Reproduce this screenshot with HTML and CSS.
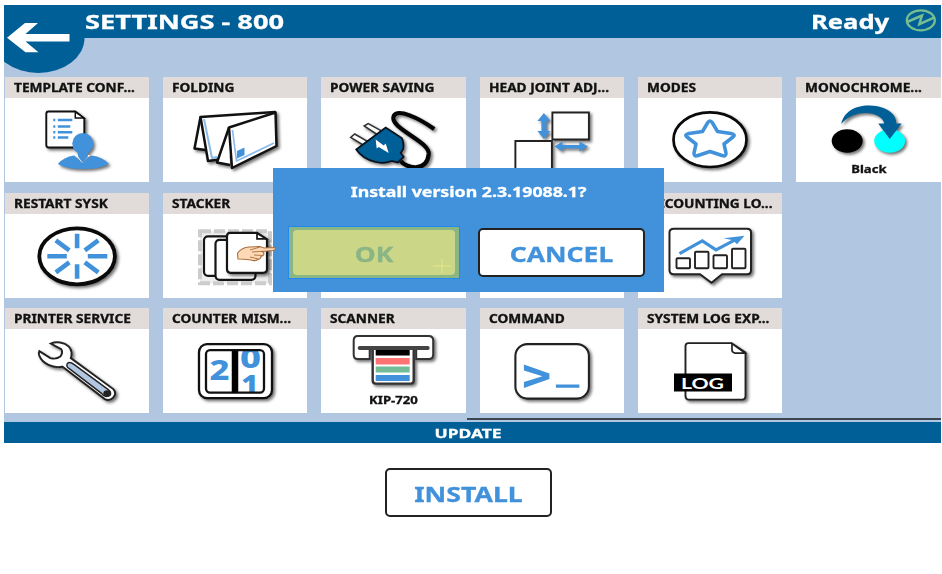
FILE: index.html
```html
<!DOCTYPE html>
<html lang="en">
<head>
<meta charset="utf-8">
<title>Settings</title>
<link rel="stylesheet" href="styles.css">
</head>
<body>
<main class="window">
  <header class="header">
    <svg class="back" viewBox="4 5 84 70" width="84" height="70"><ellipse cx="38.3" cy="38" rx="46.2" ry="35" fill="#005f96"/><path d="M7 37.7 25 23H38L25.500 34H69.500V41.500H25.500L38.500 52.300H25.500Z" fill="#fff"/></svg>
    <h1 class="title"><span class="wide t-settings">SETTINGS - 800</span></h1>
    <div class="status"><span class="wide t-ready">Ready</span></div>
    <svg class="power" viewBox="905 8 33 25" width="33" height="25" fill="none" stroke="#76bd91" stroke-width="2.300"><ellipse cx="920.8" cy="20.300" rx="14" ry="10"/><path d="M907 22 922 15.500 919.300 24.200 934 17.700" stroke-width="2.500"/></svg>
  </header>

  <section class="grid">
    <article class="tile"><h2><span class="wide t-tile">TEMPLATE CONF...</span></h2>
      <svg class="icon" viewBox="4.700 98 144.300 84"><g class="shadow"><path d="M48 111.500H75L84 118.500V145Q84 147.500 81 147.500H48.500Q46 147.500 46 145V114Q46 111.500 48 111.500Z" fill="#fff" stroke="#111" stroke-width="1.900"/><path d="M75 112V118H83.500Z" fill="#fff" stroke="#111" stroke-width="1.500"/><path d="M53 120h2m2.500 0H72M53 126.500h2m2.500 0H70M53 132.300h2m2.500 0H72M53 137.500h2m2.500 0H68" stroke="#4192da" stroke-width="2.400" fill="none"/><path d="M57.500 164Q63 157 74 155.500L82 163 91 155.500Q103 157 108.500 164 100 169 83 169 65 169 57.500 164Z" fill="#4192da"/><path d="M75 155 82 163 90 155Z" fill="#fff"/><path d="M77 151H88L87.500 157 82.500 163 78 157Z" fill="#4192da"/><ellipse cx="82.500" cy="143.500" rx="10.500" ry="10.500" fill="#4192da"/></g></svg></article>
    <article class="tile"><h2><span class="wide t-tile">FOLDING</span></h2>
      <svg class="icon" viewBox="163 98 144.300 84"><g class="shadow" stroke="#111" stroke-width="2.500" stroke-linejoin="round" fill="#fff"><path d="M200.500 117 194.500 148.500 205.500 150"/><path d="M200.500 117 275 112 276 145 222 159 208 161Z"/><path d="M204 119 212 158 217 157" fill="none" stroke="#8bbbea" stroke-width="2"/><path d="M229 127.500 217 162.500 230 165"/><path d="M229 127.500 275.500 112.500 276.500 146 232 168Z"/><path d="M232.500 130 236.500 161 274 143" fill="none" stroke="#8bbbea" stroke-width="1.700"/><path d="M237 151 244.500 147.500V155L237 158.500Z" fill="#4192da" stroke="none"/></g></svg></article>
    <article class="tile"><h2><span class="wide t-tile">POWER SAVING</span></h2>
      <svg class="icon" viewBox="321.300 98 144.300 84"><g class="shadow"><path d="M434.500 129C419 118 398 108 394 116 389 128 430 141 429 154 427 173 406 168 401 161" fill="none" stroke="#050505" stroke-width="4.200"/><g fill="#fff" stroke="#333" stroke-width="1.500"><path d="M351 137.300 355 134 368 141.500 363.500 145ZM364.500 126 368.500 123.500 382 131 377.500 134.500Z"/></g><path d="M356.500 149.500 386 127.500 402 138Q404.500 143 403.500 149L401 153 404 157 398 162.500 392 161Q384 164 376 162 363 159 356.500 149.500Z" fill="#005f96" stroke="#07101a" stroke-width="1.700"/><path d="M376 139.500 384 145.500 386 143.500 389 153 379 147 377 148.500Z" fill="#fff"/></g></svg></article>
    <article class="tile"><h2><span class="wide t-tile">HEAD JOINT ADJ...</span></h2>
      <svg class="icon" viewBox="479.600 98 144.300 84"><g class="shadow"><path d="M552 112.500H588.500V139.500H552ZM515 141H551.500V169H515Z" fill="#fff" stroke="#222" stroke-width="1.900"/><path d="M543.500 113 550 121H546V131H550L543.500 139 537 131H541V121H537ZM554 146.500 562 141.500V145H579V141.500L587.500 146.500 579 151.500V148.500H562V151.500Z" fill="#4192da"/></g></svg></article>
    <article class="tile"><h2><span class="wide t-tile">MODES</span></h2>
      <svg class="icon" viewBox="638 98 144.300 84"><ellipse class="shadow" cx="710" cy="139.700" rx="36.500" ry="27.300" fill="#fff" stroke="#0a0a0a" stroke-width="2.700"/><path d="M707.500 123Q710 119 712.500 123L717.500 131.500 731 133.500Q736 134.500 733 137L724 144 726 153Q726.500 157 722 155.500L710 151.500 698 155.500Q693.500 157 694 153L696 144 687 137Q684 134.500 689 133.500L702.500 131.500Z" fill="#fff" stroke="#4192da" stroke-width="3.500" stroke-linejoin="round"/></svg></article>
    <article class="tile"><h2><span class="wide t-tile">MONOCHROME...</span></h2>
      <svg class="icon" viewBox="796.300 98 144.300 84"><g class="shadow"><ellipse cx="847.500" cy="141" rx="15.500" ry="11.700"/><ellipse cx="890" cy="141" rx="15.500" ry="11.700" fill="#0ff"/><path d="M841.500 124C844 111 857 105 870 105.500 887 106 897 114 896.500 123.500H902L890 139 878.500 123.500H884.500C883 112 856 107 841.500 124Z" fill="#005f96"/></g></svg>
      <p class="caption"><span class="wide t-tile">Black</span></p></article>

    <article class="tile"><h2><span class="wide t-tile">RESTART SYSK</span></h2>
      <svg class="icon" viewBox="4.700 213.700 144.300 84"><ellipse class="shadow" cx="76.800" cy="256" rx="37.800" ry="28" fill="#fff" stroke="#0a0a0a" stroke-width="3.800"/><path d="M76.800 233.500V248M76.800 264V278.500M47 256H66.500M87.500 256H107M55.500 240 69 250M98 240 84.500 250M55.500 272 69 262M98 272 84.500 262" stroke="#4192da" stroke-width="4.600"/></svg></article>
    <article class="tile"><h2><span class="wide t-tile">STACKER</span></h2>
      <svg class="icon" viewBox="163 213.700 144.300 84"><path d="M200 231H270V283H200Z" fill="#eee" stroke="#ccc" stroke-width="4" stroke-dasharray="11 3"/><g fill="#fff" stroke="#151515" stroke-width="2.200"><rect x="204" y="236" width="38" height="39.500" rx="4"/><rect x="215.500" y="239.500" width="40" height="40" rx="4"/><path class="shadow" d="M230 232.500H257L267 239V269Q267 272.500 263 272.500H230.500Q227 272.500 227 269V236Q227 232.500 230 232.500Z"/><path d="M257 233V238.500H266Z" stroke-width="1.700"/></g></svg></article>
    <article class="tile"></article>
    <article class="tile"></article>
    <article class="tile"><h2><span class="wide t-tile">ACCOUNTING LO...</span></h2>
      <svg class="icon" viewBox="638 213.700 144.300 84"><path class="shadow" d="M674 228.500H747Q751 228.500 751 232V270Q751 274 747 274H722L711.500 282.500 700 274H674Q669.500 274 669.500 270V232Q669.500 228.500 674 228.500Z" fill="#fff" stroke="#222" stroke-width="2"/><g fill="#fff" stroke="#222" stroke-width="1.900"><rect x="676.500" y="258" width="13.500" height="10" rx="1"/><rect x="695" y="251.500" width="13.500" height="16.500" rx="1"/><rect x="713.500" y="255" width="13.500" height="13" rx="1"/><rect x="732" y="248.500" width="13.500" height="19.500" rx="1"/></g><path d="M679.500 253.300 702.300 240.500 716 249.500 735 239.500" fill="none" stroke="#4192da" stroke-width="3.200"/><path d="M723.500 238 744.500 235.500 737 244 733 240Z" fill="#4192da"/></svg></article>
    <div></div>

    <article class="tile"><h2><span class="wide t-tile">PRINTER SERVICE</span></h2>
      <svg class="icon" viewBox="4.700 329.400 144.300 84"><g class="shadow"><path d="M50.500 344C56 341.500 64 342.500 68.500 347 71.500 350 72 355 70.500 358.500L113 389.500C118 395 111 402.500 104.500 399.500L62 367C53 369 42 364 39 356Q38 353 39 351.500L50 358.500Q56 360 60 357 63 353 61 349.500Z" fill="#fff" stroke="#222" stroke-width="1.900"/><path d="M67 364Q65.500 367 69 369L101.500 394Q104 398 108 396.500 112 393 108 390L74 365Q69 361.500 67 364Z" fill="#b1c6e1" stroke="#222" stroke-width="1.400"/><ellipse cx="107" cy="394" rx="4" ry="3.300" fill="#222"/></g></svg></article>
    <article class="tile"><h2><span class="wide t-tile">COUNTER MISM...</span></h2>
      <svg class="icon" viewBox="163 329.400 144.300 84"><rect class="shadow" x="199" y="344.500" width="73" height="54" rx="8" fill="#fff" stroke="#111" stroke-width="2.300"/><svg x="206" y="350.500" width="58" height="42.500" viewBox="206 350.500 58 42.500"><text class="digit" x="209.500" y="380" textLength="20" lengthAdjust="spacingAndGlyphs">2</text><text class="digit" x="240" y="368.500" textLength="21" lengthAdjust="spacingAndGlyphs">0</text><text class="digit" x="241" y="395" textLength="18" lengthAdjust="spacingAndGlyphs">1</text></svg><rect x="206" y="350.500" width="58" height="42.500" rx="4" fill="none" stroke="#111" stroke-width="2.300"/><path d="M235 351V393" stroke="#000" stroke-width="6.500"/></svg></article>
    <article class="tile"><h2><span class="wide t-tile">SCANNER</span></h2>
      <svg class="icon" viewBox="321.300 329.400 144.300 84"><g class="shadow"><path d="M358 336.500H429Q433.500 336.500 433.500 341V355Q433.500 359.500 429 359.500H416.500V347.500H370V359.500H358Q354 359.500 354 355V341Q354 336.500 358 336.500Z" fill="#fff" stroke="#333" stroke-width="2"/><path d="M373 349H414V381Q414 384 411 384H376Q373 384 373 381Z" fill="#fff" stroke="#333" stroke-width="2.400"/><path d="M360 348.500H428" stroke="#444" stroke-width="4" stroke-linecap="round"/></g><path d="M376 350.500H410V356H376Z"/><path d="M376 358.500H410V365H376Z" fill="#ff7373"/><path d="M376 367H410V373H376Z" fill="#72bd98"/><path d="M376 375.500H410V381.500H376Z" fill="#4192da"/></svg>
      <p class="caption"><span class="wide t-tile">KIP-720</span></p></article>
    <article class="tile"><h2><span class="wide t-tile">COMMAND</span></h2>
      <svg class="icon" viewBox="479.600 329.400 144.300 84"><rect class="shadow" x="515" y="344.500" width="73.500" height="54.500" rx="12" fill="#fff" stroke="#222" stroke-width="2.100"/><path d="M523.500 365 549 374V379.500L523.500 388.500V382.500L542 376.700 523.500 371ZM555.500 385H579V388.200H555.500Z" fill="#4192da"/></svg></article>
    <article class="tile"><h2><span class="wide t-tile">SYSTEM LOG EXP...</span></h2>
      <svg class="icon" viewBox="638 329.400 144.300 84"><path class="shadow" d="M688.500 343.500H731.500L745.500 353V396.500Q745.500 400 742 400H689Q685.500 400 685.500 396.500V346.500Q685.500 343.500 688.500 343.500Z" fill="#fff" stroke="#222" stroke-width="1.900"/><path d="M732 344V350.500Q732 353 735 353.500H745Z" fill="#fff" stroke="#222" stroke-width="1.700"/><path d="M674 374H732V392H674Z"/><text class="log" x="681" y="389" textLength="43" lengthAdjust="spacingAndGlyphs">LOG</text></svg></article>
  </section>
  <div class="rule"></div>
  <h2 class="update"><span class="wide t-update">UPDATE</span></h2>
  <section class="footer"><button class="button"><span class="wide t-install">INSTALL</span></button></section>

  <div class="dialog">
    <p class="question"><span class="wide t-question">Install version 2.3.19088.1?</span></p>
    <div class="actions">
      <div class="focus"><button class="ok"><span class="wide t-ok">OK</span></button>
        <svg class="cross" viewBox="0 0 18 14" width="18" height="14"><path d="M9 0V14M0 7H18" stroke="#e4e889" stroke-width="1"/></svg></div>
      <button class="button"><span class="wide t-cancel">CANCEL</span></button>
    </div>
    <svg class="hand" viewBox="236 244 41 19" width="41" height="19"><path d="M237.500 253Q242 247.500 249 247L260 246.500 264 248 275.500 247.500Q276.500 249.500 273 250.500L262 251.500 264 253Q264 256 261 256.500 261 259 258 259.500 255 261.500 251 260 244 259 238 259Z" fill="#ffd9b5" stroke="#a86f3e" stroke-width="1.100"/><path d="M263 251.300 252 252M262.500 255.500 254 255M258.500 259 250 257M260 247 250 250" fill="none" stroke="#a86f3e" stroke-width=".9"/></svg>
  </div>
</main>
</body>
</html>
```

FILE: styles.css
```css
* { box-sizing: border-box; }
body { margin: 0; background: #fff; font-family: "Noto Sans", "Open Sans", sans-serif; font-weight: 700; overflow: hidden; }
h1, h2, p { margin: 0; font-weight: 700; }
button { font: inherit; padding: 0; }
.window { position: relative; width: 937px; height: 569px; margin: 5px 0 0 4px; }
.header { position: relative; display: flex; align-items: center; height: 33px; padding: 0 3px 0 81px; background: #005f96; color: #fff; font-size: 20px; line-height: 33px; }
.back { position: absolute; left: 0; top: 0; }
.title { flex: 1; font-size: 20px; }
.status { width: 94px; }
.power { display: block; margin-top: -2px; }
.wide { display: inline-block; white-space: nowrap; transform-origin: left center; -webkit-text-stroke: .3px currentColor; }
.t-settings { transform: scaleX(1.36); }
.t-ready { transform: scaleX(1.28); }
.t-tile { transform: scaleX(1.19); }
.t-update { transform: scaleX(1.34); }
.t-install { transform: scaleX(1.27); }
.t-question { transform: scaleX(1.315); }
.t-ok, .t-cancel { transform: scaleX(1.26); }
.t-update, .t-install, .t-question, .t-ok, .t-cancel { transform-origin: center; }
.grid { display: grid; grid-template-columns: repeat(6, 144.300px); grid-template-rows: repeat(3, 105px); gap: 10.700px 14.020px; height: 384px; padding: 39px 0 0 .7px; background: #b1c6e1; }
.tile { position: relative; background: #fff; }
.tile h2 { height: 21px; padding-left: 9px; background: #e1dcda; color: #111; font-size: 11.500px; line-height: 22px; }
.icon { display: block; width: 100%; height: 84px; }
.shadow { filter: drop-shadow(2px 2px 1.500px rgba(0, 0, 0, .55)); }
.caption { position: absolute; inset: auto 0 5px; text-align: center; color: #111; font-size: 11px; line-height: 16px; }
.caption .wide { transform-origin: center; }
.digit { font: 800 28px "Noto Sans", sans-serif; fill: #4192da; }
.log { font: 700 16px Lato, sans-serif; fill: #fff; }
.rule { position: relative; height: 2px; margin: -4px 0 2px 463px; background: #3c4650; }
.update { height: 21px; padding-right: 8px; background: #005f96; color: #fff; font-size: 13px; line-height: 23px; text-align: center; }
.footer { display: flex; justify-content: center; padding: 25px 8px 0 0; }
.button { width: 167px; height: 49px; border: 2px solid #222; border-radius: 5px; background: #fff; color: #4192da; font-size: 21px; line-height: 48px; overflow: hidden; }
.button .wide, .ok .wide { display: block; height: 45px; }
.dialog { position: absolute; left: 269px; top: 163px; width: 391px; height: 124px; background: #4192da; }
.question { height: 58px; padding-top: 13px; color: #fff; font-size: 13.500px; line-height: 23px; text-align: center; }
.actions { display: flex; gap: 18px; padding-left: 15px; align-items: center; }
.focus { position: relative; width: 172px; height: 53px; padding: 3px 4px; border: 1px solid #2389ef; background: #8ab585; }
.ok { display: block; width: 100%; height: 100%; border: 0; border-radius: 4px; background: #ccd687; color: #8ab585; font-size: 21px; line-height: 49px; }
.cross { position: absolute; right: 8px; bottom: 5px; }
.hand { position: absolute; left: -37px; top: 76px; }
```
